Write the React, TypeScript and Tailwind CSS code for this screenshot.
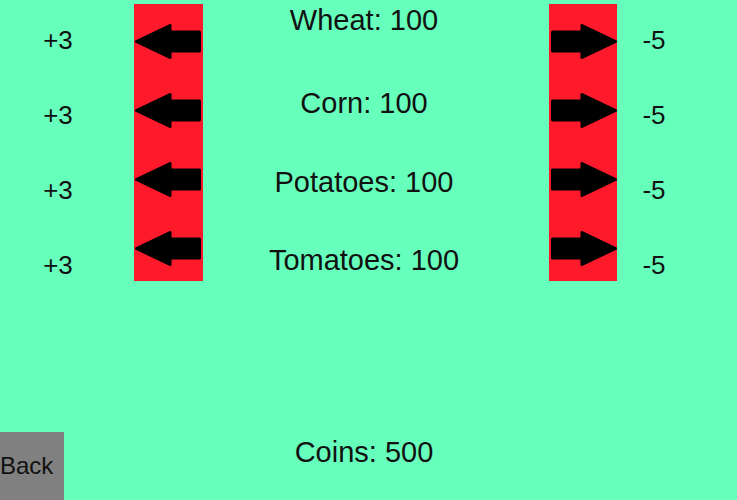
import React from 'react';

const crops = ['Wheat', 'Corn', 'Potatoes', 'Tomatoes'];
const centerMargins = ['mt-[5px]', 'mt-[53px]', 'mt-[49px]', 'mt-[48px]'];

const Arrow: React.FC<{ dir: 'left' | 'right' }> = ({ dir }) => (
  <svg
    width="66"
    height="35"
    viewBox="0 0 66 35"
    className={dir === 'right' ? 'scale-x-[-1]' : ''}
  >
    <polygon
      points="1.5,17.5 35,1.5 35,8 64.5,8 64.5,27 35,27 35,33.5"
      fill="#000"
      stroke="#000"
      strokeWidth="3"
      strokeLinejoin="round"
    />
  </svg>
);

const App: React.FC = () => {
  return (
    <div
      className="w-[737px] h-[500px] bg-[#66ffbb] flex flex-col text-[#111] overflow-hidden"
      style={{ fontFamily: '"Liberation Sans", Arial, sans-serif' }}
    >
      <div className="flex items-start">
        {/* buy amounts */}
        <div className="w-[116px] shrink-0 flex flex-col items-center mt-[3px] text-[26px]">
          {crops.map((c) => (
            <div key={c} className="h-[75px] flex items-center">+3</div>
          ))}
        </div>

        <div className="ml-[18px] shrink-0 mt-[4px] w-[69px] h-[277px] bg-[#ff1a2b] flex flex-col pt-[20px] gap-[34px] pl-[1px]">
          {crops.map((c) => (
            <Arrow key={c} dir="left" />
          ))}
        </div>

        {/* stock */}
        <div className="w-[346px] shrink-0 flex flex-col items-center pr-[24px] text-[29px]">
          {crops.map((c, i) => (
            <div key={c} className={`h-[30px] leading-[30px] ${centerMargins[i]}`}>
              {c}: 100
            </div>
          ))}
        </div>

        <div className="mt-[4px] shrink-0 w-[68px] h-[277px] bg-[#ff1a2b] flex flex-col items-end pt-[20px] gap-[34px]">
          {crops.map((c) => (
            <Arrow key={c} dir="right" />
          ))}
        </div>

        {/* sell amounts */}
        <div className="w-[74px] shrink-0 flex flex-col items-center mt-[3px] text-[26px]">
          {crops.map((c) => (
            <div key={c} className="h-[75px] flex items-center">-5</div>
          ))}
        </div>
      </div>

      <div className="mt-auto flex items-end">
        <button className="w-[64px] h-[68px] bg-[#808080] text-[24px] text-left leading-none">
          Back
        </button>
        <div className="w-[600px] text-center text-[29px] leading-[30px] mb-[33px]">Coins: 500</div>
      </div>
    </div>
  );
};

export default App;
